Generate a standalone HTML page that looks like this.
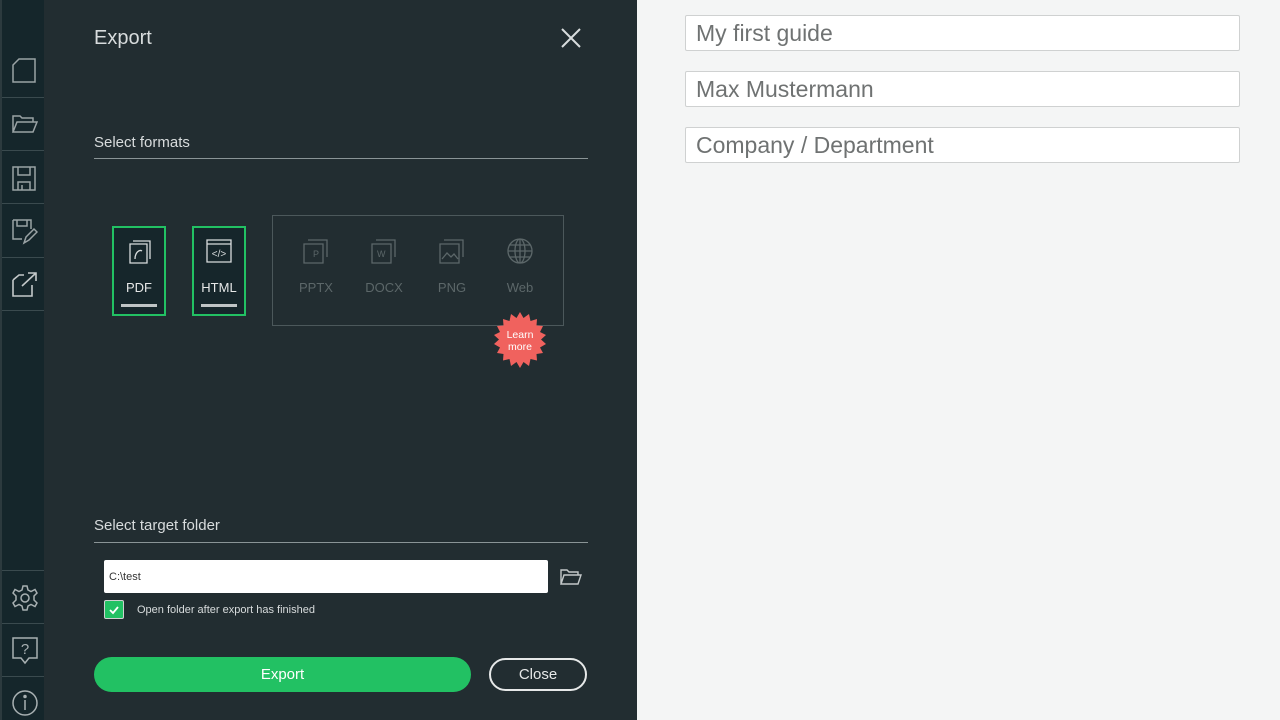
<!DOCTYPE html>
<html><head><meta charset="utf-8"><style>
*{box-sizing:border-box;margin:0;padding:0}
body{width:1280px;height:720px;overflow:hidden;background:#f4f5f5;font-family:"Liberation Sans",sans-serif;position:relative}
.abs{position:absolute}
#side{left:0;top:0;width:44px;height:720px;background:#15262b;border-left:2px solid #2c3a3e}
.sep{position:absolute;left:0;width:44px;height:1px;background:#3a4a4e}
#panel{left:44px;top:0;width:593px;height:720px;background:#222d31}
.t{color:#d8dcdd;position:absolute}
.inp{position:absolute;left:685px;width:555px;height:36px;background:#fff;border:1px solid #cfd1d1;border-radius:2px;color:#6f7272;font-size:23px;padding:5px 10px;line-height:24px}
.fmt{position:absolute;top:226px;width:54px;height:90px;border:2px solid #22c163;background:#16262b}
.fmt .lbl{position:absolute;top:52px;width:100%;text-align:center;color:#e6e8e8;font-size:13px}
.fmt .bar{position:absolute;left:7px;right:7px;top:76px;height:3px;background:#bfc4c5}
.dis{position:absolute;top:280px;width:60px;text-align:center;color:#5c6769;font-size:13px}
svg{position:absolute}
</style></head><body>
<div id="side" class="abs">
<div class="sep" style="top:97px"></div><div class="sep" style="top:150px"></div><div class="sep" style="top:203px"></div><div class="sep" style="top:257px"></div><div class="sep" style="top:310px"></div>
<div class="sep" style="top:570px"></div><div class="sep" style="top:623px"></div><div class="sep" style="top:676px"></div>
<svg style="left:8px;top:56px" width="28" height="28" viewBox="0 0 28 28" fill="none" stroke="#9aa3a5" stroke-width="1.5"><path d="M3 9L9 3H25V26H3Z"/></svg>
<svg style="left:8px;top:110px" width="28" height="28" viewBox="0 0 28 28" fill="none" stroke="#9aa3a5" stroke-width="1.5"><path d="M3 22V6H10L12 8H23V12M3 22L7 12H27L23 22Z"/></svg>
<svg style="left:8px;top:164px" width="28" height="28" viewBox="0 0 28 28" fill="none" stroke="#9aa3a5" stroke-width="1.5"><path d="M3 3H25V26H3Z M8 3V11H20V3 M8 26V18H20V26 M12 21V26"/></svg>
<svg style="left:8px;top:217px" width="28" height="28" viewBox="0 0 28 28" fill="none" stroke="#9aa3a5" stroke-width="1.5"><path d="M3 3H21V12 M3 3V22H12 M7 3V9H17V3 M14 26L16 20L24 12L27 15L19 23Z"/></svg>
<svg style="left:8px;top:270px" width="28" height="28" viewBox="0 0 28 28" fill="none" stroke="#c3c8c9" stroke-width="1.6"><path d="M3 10L9 5H14 M3 10V26H22V15 M12 16L26 3 M18 3H26V11"/></svg>
<svg style="left:9px;top:584px" width="28" height="28" viewBox="0 0 28 28" fill="none" stroke="#a8b0b2" stroke-width="1.5"><circle cx="14" cy="14" r="4"/><path d="M12 2H16L17 6L20 7.5L24 5.5L26 9L23 12V16L26 19L24 22.5L20 20.5L17 22L16 26H12L11 22L8 20.5L4 22.5L2 19L5 16V12L2 9L4 5.5L8 7.5L11 6Z"/></svg>
<svg style="left:9px;top:636px" width="28" height="30" viewBox="0 0 28 30" fill="none" stroke="#a8b0b2" stroke-width="1.5"><path d="M2 2H26V22H18L14 27L10 22H2Z"/><text x="14" y="18" fill="#a8b0b2" stroke="none" font-size="15" text-anchor="middle" font-family="Liberation Sans">?</text></svg>
<svg style="left:9px;top:689px" width="28" height="28" viewBox="0 0 28 28" fill="none" stroke="#a8b0b2" stroke-width="1.5"><circle cx="14" cy="14" r="12"/><path d="M14 11V21"/><circle cx="14" cy="7.5" r="1" fill="#a8b0b2"/></svg>
</div>
<div id="panel" class="abs">
<div class="t" style="left:50px;top:27px;font-size:20px">Export</div>
<svg style="left:516px;top:27px" width="22" height="22" viewBox="0 0 22 22" stroke="#d8dcdd" stroke-width="2"><path d="M2 2L20 20M20 2L2 20"/></svg>
<div class="t" style="left:50px;top:134px;font-size:15px">Select formats</div>
<div class="abs" style="left:50px;top:158px;width:494px;height:1px;background:#8a9496"></div>
<div class="fmt" style="left:68px"><svg style="left:13px;top:9px" width="26" height="28" viewBox="0 0 26 28" fill="none" stroke="#d8dcdd" stroke-width="1.3"><path d="M6 4H23V22 M3 7H20V26H3Z M8 22C8 16 12 12 15 14"/></svg><div class="lbl">PDF</div><div class="bar"></div></div>
<div class="fmt" style="left:148px"><svg style="left:11px;top:10px" width="28" height="26" viewBox="0 0 28 26" fill="none" stroke="#d8dcdd" stroke-width="1.3"><path d="M2 2H26V24H2Z M2 6H26"/><text x="14" y="19" fill="#d8dcdd" stroke="none" font-size="10" text-anchor="middle" font-family="Liberation Sans">&lt;/&gt;</text></svg><div class="lbl">HTML</div><div class="bar"></div></div>
<div class="abs" style="left:228px;top:215px;width:292px;height:111px;border:1px solid #4c585b"></div>
<svg style="left:258px;top:237px" width="28" height="28" viewBox="0 0 28 28" fill="none" stroke="#5c6769" stroke-width="1.3"><path d="M6 3H25V20 M2 7H21V26H2Z"/><text x="11" y="20" fill="#5c6769" stroke="none" font-size="9">P</text></svg>
<svg style="left:326px;top:237px" width="28" height="28" viewBox="0 0 28 28" fill="none" stroke="#5c6769" stroke-width="1.3"><path d="M6 3H25V20 M2 7H21V26H2Z"/><text x="7" y="20" fill="#5c6769" stroke="none" font-size="9">W</text></svg>
<svg style="left:394px;top:237px" width="28" height="28" viewBox="0 0 28 28" fill="none" stroke="#5c6769" stroke-width="1.3"><path d="M6 3H25V20 M2 7H21V26H2Z M4 22L9 16L13 20L16 17L20 22"/></svg>
<svg style="left:462px;top:237px" width="28" height="28" viewBox="0 0 28 28" fill="none" stroke="#5c6769" stroke-width="1.3"><circle cx="14" cy="14" r="12"/><ellipse cx="14" cy="14" rx="5" ry="12"/><path d="M2 14H26M4 8H24M4 20H24M14 2V26"/></svg>
<div class="dis" style="left:242px">PPTX</div><div class="dis" style="left:310px">DOCX</div><div class="dis" style="left:378px">PNG</div><div class="dis" style="left:446px">Web</div>
<svg style="left:446px;top:311px" width="60" height="60" viewBox="0 0 60 60"><polygon fill="#f0625e" points="30,1 33.5,7 39,3 40.5,10 47,8 46.5,14.5 53,15 50,21 56,24 51,28.5 56,33 50,36.5 53,42 46.5,43 47,49.5 40.5,48 39,55 33.5,51 30,57 26.5,51 21,55 19.5,48 13,49.5 13.5,43 7,42 10,36.5 4,33 9,28.5 4,24 10,21 7,15 13.5,14.5 13,8 19.5,10 21,3 26.5,7"/><text x="30" y="27" fill="#fff" font-size="10.5" text-anchor="middle" font-family="Liberation Sans">Learn</text><text x="30" y="39" fill="#fff" font-size="10.5" text-anchor="middle" font-family="Liberation Sans">more</text></svg>
<div class="t" style="left:50px;top:517px;font-size:15px">Select target folder</div>
<div class="abs" style="left:50px;top:542px;width:494px;height:1px;background:#8a9496"></div>
<div class="abs" style="left:60px;top:560px;width:444px;height:33px;background:#fff;border-radius:2px;font-size:11px;color:#333;padding:11px 5px">C:\test</div>
<svg style="left:516px;top:568px" width="22" height="18" viewBox="0 0 22 18" fill="none" stroke="#c3c8c9" stroke-width="1.4"><path d="M1 16V2H7L9 4H18V7 M1 16L4 7H21L18 16Z"/></svg>
<div class="abs" style="left:60px;top:600px;width:20px;height:19px;background:#22c163;border:1px solid #cfd1d1;border-radius:2px"><svg style="left:3px;top:3px" width="12" height="12" viewBox="0 0 12 12" fill="none" stroke="#fff" stroke-width="1.8"><path d="M2 6L5 9L10 3"/></svg></div>
<div class="t" style="left:93px;top:604px;font-size:11px">Open folder after export has finished</div>
<div class="abs" style="left:50px;top:657px;width:377px;height:35px;border-radius:18px;background:#22c163;color:#fff;font-size:15px;text-align:center;line-height:35px">Export</div>
<div class="abs" style="left:445px;top:658px;width:98px;height:33px;border-radius:17px;border:2px solid #e6e8e8;color:#e6e8e8;font-size:15px;text-align:center;line-height:29px">Close</div>
</div>
<div class="inp" style="top:15px">My first guide</div>
<div class="inp" style="top:71px">Max Mustermann</div>
<div class="inp" style="top:127px">Company / Department</div>
</body></html>
